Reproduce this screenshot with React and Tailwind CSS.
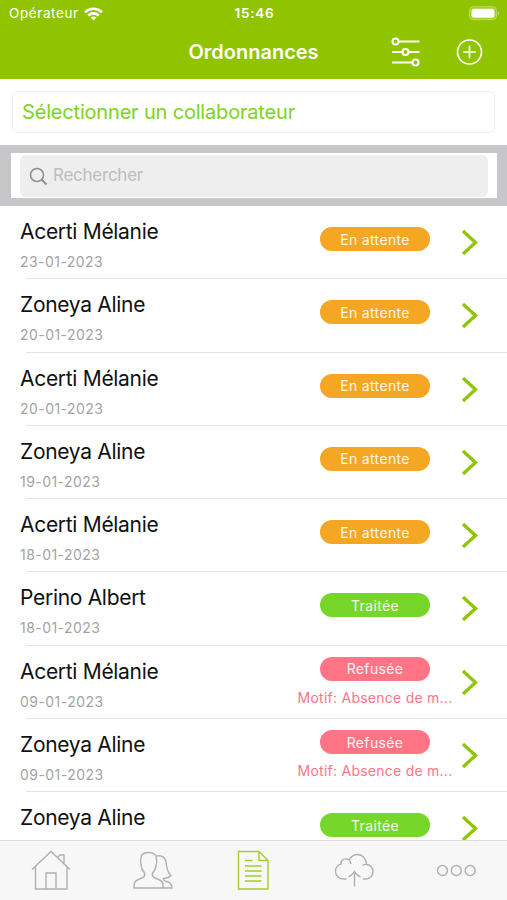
import React, { useState } from 'react';

const prescriptions = [
  { id: 1, name: 'Acerti Mélanie', date: '23-01-2023', status: 'En attente' },
  { id: 2, name: 'Zoneya Aline', date: '20-01-2023', status: 'En attente' },
  { id: 3, name: 'Acerti Mélanie', date: '20-01-2023', status: 'En attente' },
  { id: 4, name: 'Zoneya Aline', date: '19-01-2023', status: 'En attente' },
  { id: 5, name: 'Acerti Mélanie', date: '18-01-2023', status: 'En attente' },
  { id: 6, name: 'Perino Albert', date: '18-01-2023', status: 'Traitée' },
  { id: 7, name: 'Acerti Mélanie', date: '09-01-2023', status: 'Refusée', reason: 'Absence de m...' },
  { id: 8, name: 'Zoneya Aline', date: '09-01-2023', status: 'Refusée', reason: 'Absence de m...' },
  { id: 9, name: 'Zoneya Aline', date: '', status: 'Traitée' },
];

const statusColorClass = (s) => {
  return {
    'En attente': 'bg-[#f5a623]',
    'Traitée': 'bg-[#76d62a]',
    'Refusée': 'bg-[#ff7586]',
  }[s] || 'bg-gray-400';
};

const StatusBar = () => (
  <div className="h-7 flex items-center justify-between pl-[9px] pr-[7px] pb-px text-white">
    <div className="w-40 flex items-center gap-[5px]">
      <span className="text-[13.5px] tracking-[0.6px]">Opérateur</span>
      <svg width="19" height="14" viewBox="0 0 19 14" fill="none" stroke="currentColor" strokeWidth="2.6">
        <path d="M1 5.2C5.8 .5 13.2 .5 18 5.2" />
        <path d="M4.2 8.5C7.2 5.7 11.8 5.7 14.8 8.5" />
        <path d="M9.5 13.4L6.6 10.6C8.2 9.1 10.8 9.1 12.4 10.6Z" fill="currentColor" stroke="none" />
      </svg>
    </div>
    <span className="text-[13.5px] font-semibold tracking-[0.8px]">15:46</span>
    <div className="w-40 flex justify-end">
      <svg width="31" height="15" viewBox="0 0 31 15">
        <rect x=".5" y=".7" width="27" height="13" rx="3.8" fill="#fff" fillOpacity=".15" stroke="#fff" strokeOpacity=".35" />
        <rect x="2.5" y="2.7" width="23" height="9" rx="2" fill="#fff" />
        <path d="M29 5.2Q31 7.2 29 9.2Z" fill="#fff" fillOpacity=".5" />
      </svg>
    </div>
  </div>
);

const Header = () => (
  <div className="h-[51px] grid grid-cols-[1fr_auto_1fr] items-center pb-[3px] text-white">
    <span />
    <h1 className="text-[20px] font-semibold">Ordonnances</h1>
    <div className="flex items-center justify-end gap-[35px] pr-[23px]">
      <button>
        <svg className="block" width="30" height="32" viewBox="0 0 30 32" fill="none" stroke="currentColor" strokeWidth="2">
          <path d="M8 5.5H28.500M1 16H11M18 16H28.500M1 26.500H21" />
          <circle cx="4.500" cy="5.500" r="3" />
          <circle cx="14.500" cy="16" r="3" />
          <circle cx="24.500" cy="26.500" r="3" />
        </svg>
      </button>
      <button>
        <svg className="block" width="28" height="28" viewBox="0 0 28 28" fill="none" stroke="currentColor" strokeWidth="1.7">
          <circle cx="13.500" cy="14" r="12" />
          <path d="M13.500 7.700V20.300M7.200 14H19.800" />
        </svg>
      </button>
    </div>
  </div>
);

const Row = ({ item }) => (
  <div className="relative h-[73.3px] flex shrink-0 pl-5">
    <div className="flex-1 pt-[11px]">
      <p className="text-[21px] leading-[29px] tracking-[-0.3px] text-[#111]">{item.name}</p>
      <p className="mt-[6px] text-[14px] leading-5 tracking-[0.45px] text-[#a3a3a3]">{item.date}</p>
    </div>
    <div className={`w-[160px] shrink-0 flex flex-col items-center ${item.reason ? 'pt-[11px]' : 'pt-[21px]'}`}>
      <span className={`w-[110px] h-6 rounded-full flex items-center justify-center text-[14px] tracking-[0.35px] text-white/90 ${statusColorClass(item.status)}`}>
        {item.status}
      </span>
      {item.reason && (
        <span className="mt-[7px] text-[14px] leading-5 tracking-[0.25px] whitespace-nowrap text-[#ff7586]">Motif: {item.reason}</span>
      )}
    </div>
    <div className="w-[52px] shrink-0 pt-[23px] pl-[6px]">
      <svg width="18" height="27" viewBox="0 0 18 27" fill="none" stroke="#90c400" strokeWidth="3.3">
        <path d="M2 2L14.5 13.5L2 25" />
      </svg>
    </div>
    <div className="absolute bottom-0 left-[26px] right-0 h-px bg-[#e4e4e6]" />
  </div>
);

const tabs = [
  {
    id: 'home',
    icon: (
      <>
        <path d="M5.500 16.500V39H37V16.500M2 19.500L21 1.500L40 19.500M27.500 7.500L30 5H34V13.500M16 39V23H26V39" />
      </>
    ),
  },
  {
    id: 'contacts',
    icon: (
      <>
        <path d="M2 38V35.500Q2 31.500 5.500 30L11 27.500Q13.500 26 12.500 23C10 20 9 17 9 14C8 11 9 9 9 7C9.500 4 13 2.500 17 2.500C22 2.500 25 5.500 24.500 9C24.500 11 25.500 12 24 15C24 18 22.500 21 20.500 23Q19.500 26 22 27.500L27.500 30Q31 31.500 31 35.500V38Z" />
        <path d="M24.500 6C29.500 5 33 7 34 12C34.500 15 34.500 18 36 21Q37 24 39 25.500Q37 28 31.500 28.500Q31.500 31 36 32Q40 33.500 40 38H31" />
      </>
    ),
  },
  {
    id: 'prescriptions',
    icon: (
      <>
        <path d="M5.500 1.500H26L35 10.500V39H5.500ZM26 1.500V10.500H35" />
        <path d="M12 10.500H19.500M12 16H28.500M12 21H28.500M12 26H28.500M12 31H28.500" />
      </>
    ),
  },
  {
    id: 'upload',
    icon: (
      <>
        <path d="M12.500 29H10C5 29 1.500 26 1.500 21.500C1.500 17.500 4 14.500 7 14C6.500 9.500 12 7.500 15 10C17 6.500 20 4.500 23.500 4.500C29 4.500 32.500 9.500 32.500 14.500C36.500 14.500 39 18 39 21.500C39 25.500 36 29 32 29H29" />
        <path d="M15 10Q16.500 11 17 14M32.500 14.500Q30.500 14 28.500 15.500M20.500 36.500V22M14.500 27Q18.500 25 20.500 21.500Q22.500 25 26.500 27" />
      </>
    ),
  },
  {
    id: 'more',
    icon: (
      <>
        <circle cx="6.500" cy="20.500" r="5" />
        <circle cx="20.300" cy="20.500" r="5" />
        <circle cx="34.200" cy="20.500" r="5" />
      </>
    ),
  },
];

const App = () => {
  const [activeTab, setActiveTab] = useState('prescriptions');

  return (
    <div className="w-full h-screen flex flex-col overflow-hidden bg-white font-[Inter,sans-serif]">
      <header className="shrink-0 bg-[#90c400]">
        <StatusBar />
        <Header />
      </header>

      <div className="shrink-0 h-[66px] pt-3 px-3">
        <button className="block w-full h-[42px] pl-[9px] rounded-md border border-[#efefef] text-left text-[20px] tracking-[-0.18px] text-[#7ed321]">
          Sélectionner un collaborateur
        </button>
      </div>

      <div className="shrink-0 h-[61px] bg-[#c7c7ca] py-2 pl-[11px] pr-[10px]">
        <div className="h-full bg-white px-[9px] pt-[2px] pb-px">
          <div className="h-full flex items-center gap-[5px] pl-[9px] rounded-md bg-[#eeeeef]">
            <svg width="19" height="19" viewBox="0 0 19 19" fill="none" stroke="#8e8e93" strokeWidth="1.6">
              <circle cx="8" cy="8" r="6.500" />
              <path d="M12.500 12.500L17.500 17.500" strokeWidth="2" />
            </svg>
            <input className="flex-1 bg-transparent outline-none text-[17px] tracking-[-0.25px] placeholder:text-[#bdbdbf]" placeholder="Rechercher" />
          </div>
        </div>
      </div>

      <main className="flex-1 min-h-0 flex flex-col overflow-hidden">
        {prescriptions.map(item => (
          <Row key={item.id} item={item} />
        ))}
      </main>

      <nav className="shrink-0 h-[60px] flex border-t border-[#dcdcdc] bg-[#f7f7f7]">
        {tabs.map(tab => (
          <button
            key={tab.id}
            className={`flex-1 flex items-center justify-center ${activeTab === tab.id ? 'text-[#a3ce2b]' : 'text-[#b0b0b0]'}`}
            onClick={() => setActiveTab(tab.id)}
          >
            <svg width="41" height="41" viewBox="0 0 41 41" fill="none" stroke="currentColor" strokeWidth="1.400">{tab.icon}</svg>
          </button>
        ))}
      </nav>
    </div>
  );
};

export default App;
